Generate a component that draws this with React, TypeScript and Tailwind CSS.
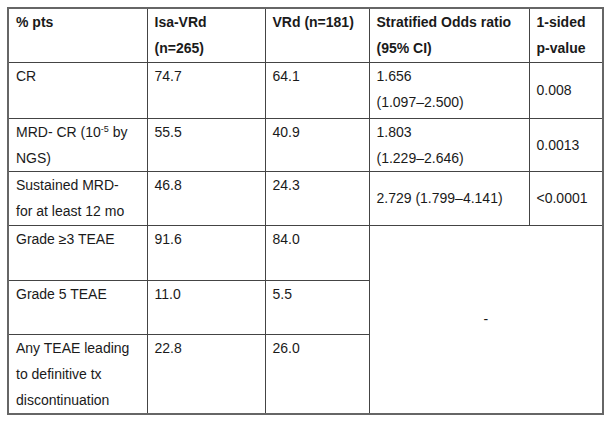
const rows = [
  { label: "CR", isa: "74.7", vrd: "64.1", odds: ["1.656", "(1.097–2.500)"], p: "0.008", h: "h-[56px]" },
  { label: "MRD", isa: "55.5", vrd: "40.9", odds: ["1.803", "(1.229–2.646)"], p: "0.0013", h: "h-[53px]" },
];

const cell = "border border-[#444] align-top px-[7px] pt-0 pb-0";

const App = () => {
  return (
    <div
      className="w-[613px] h-[421px] bg-white pt-[7px] pl-[7px] text-[14px] leading-[26px] text-[#1a1a1a]"
      style={{ fontFamily: '"Liberation Sans", Arial, sans-serif' }}
    >
      <table className="table-fixed border-collapse w-[595px] border-2 border-[#666]">
        <colgroup>
          <col className="w-[139px]" />
          <col className="w-[118px]" />
          <col className="w-[104px]" />
          <col className="w-[160px]" />
          <col className="w-[74px]" />
        </colgroup>
        <tbody>
          {/* Header */}
          <tr className="h-[54px] font-bold">
            <td className={cell}>% pts</td>
            <td className={cell}>
              Isa-VRd
              <br />
              (n=265)
            </td>
            <td className={cell}>VRd (n=181)</td>
            <td className={cell}>
              Stratified Odds ratio
              <br />
              (95% CI)
            </td>
            <td className={cell}>
              1-sided
              <br />
              p-value
            </td>
          </tr>

          {/* CR / MRD rows */}
          {rows.map((r) => (
            <tr key={r.label} className={r.h}>
              <td className={cell}>
                {r.label === "CR" ? (
                  "CR"
                ) : (
                  <>
                    MRD- CR (10<sup className="text-[9px]">-5</sup> by
                    <br />
                    NGS)
                  </>
                )}
              </td>
              <td className={cell}>{r.isa}</td>
              <td className={cell}>{r.vrd}</td>
              <td className={cell}>
                {r.odds[0]}
                <br />
                {r.odds[1]}
              </td>
              <td className={`${cell} !align-middle`}>{r.p}</td>
            </tr>
          ))}

          <tr className="h-[54px]">
            <td className={cell}>
              Sustained MRD-
              <br />
              for at least 12 mo
            </td>
            <td className={cell}>46.8</td>
            <td className={cell}>24.3</td>
            <td className={`${cell} !align-middle`}>2.729 (1.799–4.141)</td>
            <td className={`${cell} !align-middle`}>&lt;0.0001</td>
          </tr>

          <tr className="h-[55px]">
            <td className={cell}>Grade ≥3 TEAE</td>
            <td className={cell}>91.6</td>
            <td className={cell}>84.0</td>
            <td colSpan={2} rowSpan={3} className={`${cell} !align-middle text-center`}>
              -
            </td>
          </tr>
          <tr className="h-[54px]">
            <td className={cell}>Grade 5 TEAE</td>
            <td className={cell}>11.0</td>
            <td className={cell}>5.5</td>
          </tr>
          <tr className="h-[77px]">
            <td className={cell}>
              Any TEAE leading
              <br />
              to definitive tx
              <br />
              discontinuation
            </td>
            <td className={cell}>22.8</td>
            <td className={cell}>26.0</td>
          </tr>
        </tbody>
      </table>
    </div>
  );
};

export default App;
